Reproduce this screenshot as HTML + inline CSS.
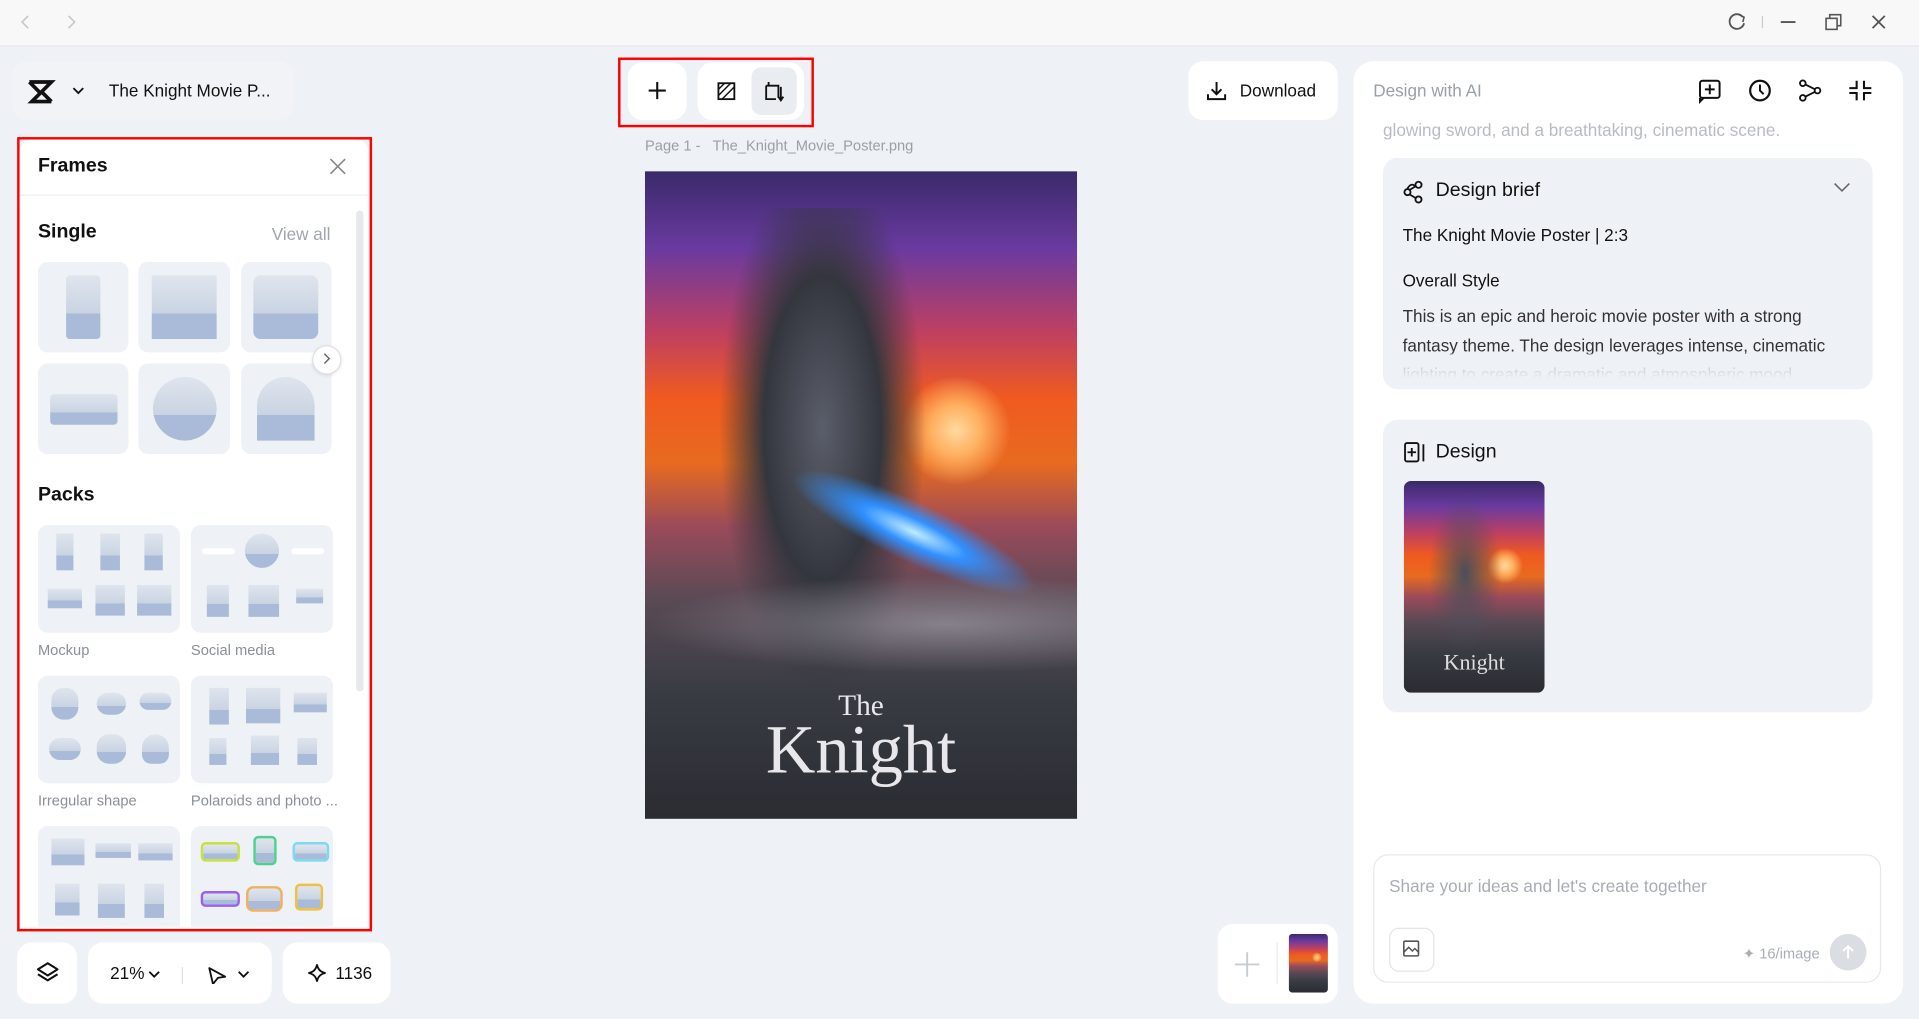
<!DOCTYPE html>
<html><head><meta charset="utf-8"><style>
html,body{margin:0;padding:0;width:1919px;height:1019px;overflow:hidden;background:#eef1f5;font-family:"Liberation Sans",sans-serif;}
#w{position:absolute;left:0;top:0;width:1568px;height:832px;transform:scale(1.2239);transform-origin:0 0;background:#eef1f5;}
.a{position:absolute;}
.card{position:absolute;background:#fff;border-radius:12px;}
.t{position:absolute;background:#eef1f5;border-radius:8px;}
.img{position:absolute;background:linear-gradient(#dfe5ee,#c9d3e2 60%,#a9bbd8 60%);}
.lbl{position:absolute;font-size:12px;color:#8a8f98;}
svg{position:absolute;}
.poster{background:
radial-gradient(circle at 72% 40%,#ffd9a0 0,#ffb060 5%,transparent 11%),
linear-gradient(180deg,#3a2a6a 0%,#6a3aa0 12%,#c04060 25%,#f05a20 35%,#e86a20 45%,#9a4a5a 55%,#5a4a55 66%,#3a3c44 80%,#2a2c32 100%);}
</style></head><body><div id="w">
<div class="a" style="left:0;top:0;width:1568px;height:37px;background:#f8f8f9;border-bottom:1px solid #e6e8eb"></div>
<svg style="left:14px;top:11px" width="60" height="14"><path d="M9 2L4 7l5 5M42 2l5 5-5 5" stroke="#c4c7cc" stroke-width="1.3" fill="none"/></svg>
<svg style="left:1410px;top:10px" width="140" height="16"><path d="M14 4a6 6 0 1 0 1 5" stroke="#555" stroke-width="1.5" fill="none"/><path d="M11 2l4 2-1 4" stroke="#555" stroke-width="1.3" fill="none"/><path d="M30 3v10" stroke="#ccc"/><path d="M45 8h12" stroke="#555" stroke-width="1.5"/><rect x="82" y="5" width="9" height="9" stroke="#555" stroke-width="1.3" fill="none"/><path d="M85 5V2h9v9h-3" stroke="#555" stroke-width="1.3" fill="none"/><path d="M120 3l10 10M130 3l-10 10" stroke="#555" stroke-width="1.5"/></svg>
<div class="a" style="left:10px;top:50px;width:230px;height:48px;background:#f1f3f6;border-radius:12px"></div>
<svg style="left:22px;top:65px" width="50" height="20"><path d="M2 2h18l-16 16h16M2 2l8 8M20 18l-8-8" stroke="#111" stroke-width="3" fill="none"/><path d="M38 7l4 4 4-4" stroke="#111" stroke-width="1.5" fill="none"/></svg>
<div class="a" style="left:89px;top:66px;font-size:14px;color:#111">The Knight Movie P...</div>
<div class="a" style="left:16px;top:114px;width:285px;height:644px;background:#fff;border-radius:10px 10px 0 0"></div>
<div class="a" style="left:14px;top:112px;width:286px;height:645px;border:2px solid #f00;"></div>
<div class="a" style="left:31px;top:127px;font-size:16px;font-weight:bold;color:#111">Frames</div>
<svg style="left:269px;top:129px" width="14" height="14"><path d="M1 1l12 12M13 1L1 13" stroke="#888" stroke-width="1.3"/></svg>
<div class="a" style="left:16px;top:159px;width:285px;height:1px;background:#eceef1"></div>
<div class="a" style="left:291px;top:172px;width:6px;height:393px;background:#e6e8ec;border-radius:3px"></div>
<div class="a" style="left:31px;top:181px;font-size:16px;font-weight:bold;color:#111">Single</div>
<div class="a" style="left:222px;top:183px;font-size:14px;color:#a0a4ab">View all</div>
<div class="t" style="left:31px;top:214px;width:74px;height:74px"></div><div class="img" style="left:54px;top:225px;width:28px;height:52px;border-radius:3px"></div>
<div class="t" style="left:113px;top:214px;width:75px;height:74px"></div><div class="img" style="left:124px;top:225px;width:53px;height:52px"></div>
<div class="t" style="left:197px;top:214px;width:74px;height:74px"></div><div class="img" style="left:207px;top:225px;width:53px;height:52px;border-radius:6px"></div>
<div class="t" style="left:31px;top:297px;width:74px;height:74px"></div><div class="img" style="left:41px;top:322px;width:55px;height:25px;border-radius:3px"></div>
<div class="t" style="left:113px;top:297px;width:75px;height:74px"></div><div class="img" style="left:125px;top:308px;width:52px;height:52px;border-radius:50%"></div>
<div class="t" style="left:197px;top:297px;width:74px;height:74px"></div><div class="img" style="left:210px;top:308px;width:47px;height:52px;border-radius:24px 24px 0 0"></div>
<div class="a" style="left:255px;top:282px;width:22px;height:22px;border-radius:50%;background:#fff;border:1px solid #dde0e5;box-shadow:0 1px 3px rgba(0,0,0,.1)"></div>
<svg style="left:262px;top:288px" width="10" height="10"><path d="M3 1l4 4-4 4" stroke="#666" stroke-width="1.2" fill="none"/></svg>
<div class="a" style="left:31px;top:396px;font-size:16px;font-weight:bold;color:#111">Packs</div>
<div class="t" style="left:31px;top:429px;width:116px;height:88px"></div>
<div class="t" style="left:156px;top:429px;width:116px;height:88px"></div>
<div class="lbl" style="left:31px;top:524px">Mockup</div><div class="lbl" style="left:156px;top:524px">Social media</div>
<div class="t" style="left:31px;top:552px;width:116px;height:88px"></div>
<div class="t" style="left:156px;top:552px;width:116px;height:88px"></div>
<div class="lbl" style="left:31px;top:647px">Irregular shape</div><div class="lbl" style="left:156px;top:647px">Polaroids and photo ...</div>
<div class="t" style="left:31px;top:675px;width:116px;height:82px;border-radius:8px 8px 0 0"></div>
<div class="t" style="left:156px;top:675px;width:116px;height:82px;border-radius:8px 8px 0 0"></div>
<div class="img" style="left:46px;top:436px;width:14px;height:30px"></div><div class="img" style="left:82px;top:436px;width:16px;height:30px"></div><div class="img" style="left:118px;top:436px;width:15px;height:30px"></div>
<div class="img" style="left:39px;top:481px;width:28px;height:16px"></div><div class="img" style="left:78px;top:478px;width:24px;height:25px"></div><div class="img" style="left:112px;top:478px;width:28px;height:25px"></div>
<div class="img" style="left:200px;top:436px;width:28px;height:28px;border-radius:50%"></div><div class="img" style="left:169px;top:478px;width:18px;height:26px"></div><div class="img" style="left:203px;top:478px;width:25px;height:26px"></div><div class="img" style="left:242px;top:481px;width:22px;height:12px"></div>
<div class="a" style="left:165px;top:448px;width:27px;height:5px;background:#fff;border-radius:3px"></div><div class="a" style="left:238px;top:448px;width:27px;height:5px;background:#fff;border-radius:3px"></div>
<div class="img" style="left:42px;top:562px;width:22px;height:26px;border-radius:10px"></div><div class="img" style="left:79px;top:566px;width:24px;height:18px;border-radius:10px"></div><div class="img" style="left:114px;top:566px;width:26px;height:14px;border-radius:10px"></div>
<div class="img" style="left:40px;top:603px;width:26px;height:18px;border-radius:10px"></div><div class="img" style="left:79px;top:600px;width:24px;height:24px;border-radius:10px"></div><div class="img" style="left:116px;top:600px;width:22px;height:24px;border-radius:12px 12px 8px 8px"></div>
<div class="img" style="left:171px;top:562px;width:16px;height:30px"></div><div class="img" style="left:201px;top:562px;width:28px;height:29px"></div><div class="img" style="left:240px;top:566px;width:27px;height:16px"></div>
<div class="img" style="left:171px;top:603px;width:14px;height:22px"></div><div class="img" style="left:205px;top:601px;width:23px;height:24px"></div><div class="img" style="left:243px;top:603px;width:16px;height:22px"></div>
<div class="img" style="left:42px;top:685px;width:27px;height:22px"></div><div class="img" style="left:78px;top:689px;width:29px;height:12px"></div><div class="img" style="left:113px;top:689px;width:28px;height:14px"></div>
<div class="img" style="left:45px;top:722px;width:20px;height:26px"></div><div class="img" style="left:80px;top:722px;width:22px;height:28px"></div><div class="img" style="left:118px;top:722px;width:16px;height:28px"></div>
<div class="img" style="left:164px;top:688px;width:28px;height:12px;border:2px solid #c8e040;border-radius:4px"></div><div class="img" style="left:207px;top:683px;width:15px;height:20px;border:2px solid #50d090;border-radius:4px"></div><div class="img" style="left:239px;top:688px;width:26px;height:12px;border:2px solid #80d8f0;border-radius:4px"></div>
<div class="img" style="left:164px;top:728px;width:28px;height:9px;border:2px solid #9a60f0;border-radius:4px"></div><div class="img" style="left:201px;top:724px;width:26px;height:17px;border:2px solid #f0b060;border-radius:6px"></div><div class="img" style="left:241px;top:722px;width:19px;height:18px;border:2px solid #f0c040;border-radius:4px"></div>
<div class="card" style="left:14px;top:770px;width:49px;height:50px"></div>
<svg style="left:29px;top:785px" width="20" height="20"><path d="M10 2l8 5-8 5-8-5z M2 11l8 5 8-5" stroke="#111" stroke-width="1.7" fill="none" stroke-linejoin="round"/></svg>
<div class="card" style="left:72px;top:770px;width:150px;height:50px"></div>
<div class="a" style="left:90px;top:787px;font-size:14px;color:#111">21%</div>
<svg style="left:120px;top:790px" width="100" height="14"><path d="M2 4l4 4 4-4M75 4l4 4 4-4" stroke="#111" stroke-width="1.5" fill="none"/><path d="M29 0v14" stroke="#e0e2e6"/><path d="M51 1l13 7-6 1-4 5z" stroke="#111" stroke-width="1.5" fill="none" stroke-linejoin="round"/></svg>
<div class="card" style="left:231px;top:770px;width:88px;height:50px"></div>
<svg style="left:251px;top:787px" width="16" height="16"><path d="M8 1Q9 7 15 8Q9 9 8 15Q7 9 1 8Q7 7 8 1z" stroke="#111" stroke-width="1.5" fill="none"/></svg>
<div class="a" style="left:274px;top:787px;font-size:14px;color:#111">1136</div>
<div class="a" style="left:505px;top:47px;width:156px;height:53px;border:2px solid #f00"></div>
<div class="card" style="left:513px;top:51px;width:48px;height:47px"></div>
<svg style="left:528px;top:65px" width="18" height="18"><path d="M9 2v14M2 9h14" stroke="#111" stroke-width="1.7"/></svg>
<div class="card" style="left:570px;top:51px;width:87px;height:47px"></div>
<div class="a" style="left:614px;top:55px;width:37px;height:39px;background:#e9ecf0;border-radius:8px"></div>
<svg style="left:585px;top:66px" width="18" height="18"><rect x="2" y="2" width="13" height="13" stroke="#111" stroke-width="1.5" fill="none"/><path d="M2 12L12 2M5 15L15 5M2 7l5-5" stroke="#111" stroke-width="1.2"/></svg>
<svg style="left:623px;top:65px" width="20" height="20"><path d="M5 2v3M3 5h10v10M3 5v11h8M15 6v10M13 14l2 3 2-3" stroke="#111" stroke-width="1.5" fill="none"/></svg>
<div class="a" style="left:527px;top:112px;font-size:12px;color:#9aa0a8">Page 1 -&nbsp;&nbsp; The_Knight_Movie_Poster.png</div>
<div class="a poster" style="left:527px;top:140px;width:353px;height:529px;overflow:hidden">
 <div class="a" style="left:60px;top:30px;width:170px;height:400px;background:radial-gradient(ellipse at 50% 45%,#5a5e6a 0,#34363e 40%,transparent 70%)"></div>
 <div class="a" style="left:110px;top:270px;width:220px;height:50px;transform:rotate(25deg);background:radial-gradient(ellipse,#c0ecff 0,#3090ff 30%,transparent 70%)"></div>
 <div class="a" style="left:0;top:330px;width:353px;height:80px;background:radial-gradient(ellipse at 70% 50%,rgba(200,200,210,.45),transparent 70%)"></div>
 <div class="a" style="left:0;top:425px;width:353px;text-align:center;font-family:'Liberation Serif',serif;color:#e8e8ec;font-size:24px;line-height:1">The</div>
 <div class="a" style="left:0;top:445px;width:353px;text-align:center;font-family:'Liberation Serif',serif;color:#e8e8ec;font-size:56px;line-height:1">Knight</div>
</div>
<div class="card" style="left:971px;top:50px;width:122px;height:48px"></div>
<svg style="left:985px;top:65px" width="18" height="18"><path d="M9 2v10M5 8l4 4 4-4M2 12v4h14v-4" stroke="#111" stroke-width="1.6" fill="none"/></svg>
<div class="a" style="left:1013px;top:66px;font-size:14px;color:#111">Download</div>
<div class="card" style="left:995px;top:755px;width:98px;height:65px"></div>
<svg style="left:1007px;top:776px" width="24" height="24"><path d="M12 2v20M2 12h20" stroke="#c8ccd2" stroke-width="1.6"/></svg>
<div class="a" style="left:1043px;top:770px;width:1px;height:34px;background:#e6e8ec"></div>
<div class="a poster" style="left:1053px;top:763px;width:32px;height:48px;border-radius:3px"></div>
<div class="a" style="left:1106px;top:50px;width:449px;height:770px;background:#fff;border-radius:16px"></div>
<div class="a" style="left:1122px;top:66px;font-size:14px;color:#9aa0a8">Design with AI</div>
<svg style="left:1386px;top:63px" width="148" height="22"><rect x="3" y="3" width="16" height="14" rx="2" stroke="#111" stroke-width="1.6" fill="none"/><path d="M6 17l-3 3v-3M11 6v8M7 10h8" stroke="#111" stroke-width="1.6" fill="none"/><circle cx="52" cy="11" r="8" stroke="#111" stroke-width="1.8" fill="none"/><path d="M52 6v5l3 3" stroke="#111" stroke-width="1.6" fill="none"/><circle cx="87" cy="5" r="2.3" stroke="#111" stroke-width="1.5" fill="none"/><circle cx="87" cy="17" r="2.3" stroke="#111" stroke-width="1.5" fill="none"/><circle cx="99" cy="11" r="2.3" stroke="#111" stroke-width="1.5" fill="none"/><path d="M89 6l8 4M89 16l8-4" stroke="#111" stroke-width="1.5"/><path d="M131 3v6h-6M137 3v6h6M131 19v-6h-6M137 19v-6h6" stroke="#111" stroke-width="1.7" fill="none"/></svg>
<div class="a" style="left:1130px;top:98px;font-size:14px;color:#b8bcc2">glowing sword, and a breathtaking, cinematic scene.</div>
<div class="a" style="left:1130px;top:129px;width:400px;height:189px;background:#eef1f5;border-radius:12px;overflow:hidden">
 <svg style="left:16px;top:18px" width="20" height="20"><circle cx="13" cy="4" r="2.5" stroke="#111" stroke-width="1.5" fill="none"/><circle cx="4" cy="10" r="2.5" stroke="#111" stroke-width="1.5" fill="none"/><circle cx="13" cy="16" r="2.5" stroke="#111" stroke-width="1.5" fill="none"/><path d="M6 8l5-3M6 12l5 3M10 5Q7 2 4 7" stroke="#111" stroke-width="1.4" fill="none"/></svg>
 <div class="a" style="left:43px;top:18px;font-size:16px;color:#111">Design brief</div>
 <svg style="left:367px;top:19px" width="16" height="10"><path d="M2 2l6 6 6-6" stroke="#666" stroke-width="1.3" fill="none"/></svg>
 <div class="a" style="left:16px;top:55px;font-size:14px;color:#111">The Knight Movie Poster | 2:3</div>
 <div class="a" style="left:16px;top:92px;font-size:14px;color:#111">Overall Style</div>
 <div class="a" style="left:16px;top:117px;width:368px;font-size:14px;line-height:24px;color:#333">This is an epic and heroic movie poster with a strong fantasy theme. The design leverages intense, cinematic lighting to create a dramatic and atmospheric mood</div>
 <div class="a" style="left:0;top:160px;width:400px;height:29px;background:linear-gradient(rgba(238,241,245,.6),#eef1f5 70%)"></div>
</div>
<div class="a" style="left:1130px;top:343px;width:400px;height:239px;background:#eef1f5;border-radius:12px">
 <svg style="left:16px;top:17px" width="20" height="20"><rect x="2" y="2" width="11" height="15" rx="1.5" stroke="#111" stroke-width="1.5" fill="none"/><path d="M7.5 6v7M4 9.5h7M17 3v14" stroke="#111" stroke-width="1.5"/></svg>
 <div class="a" style="left:43px;top:18px;font-size:16px;color:#111">Design</div>
 <div class="a poster" style="left:17px;top:50px;width:115px;height:173px;border-radius:6px;overflow:hidden"><div class="a" style="left:20px;top:10px;width:60px;height:130px;background:radial-gradient(ellipse,#4a4e5a 0,transparent 70%)"></div><div class="a" style="left:0;top:138px;width:115px;text-align:center;font-family:'Liberation Serif',serif;color:#ddd;font-size:18px">Knight</div></div>
</div>
<div class="a" style="left:1122px;top:698px;width:413px;height:103px;border:1px solid #e6e8ec;border-radius:12px;background:#fff"></div>
<div class="a" style="left:1135px;top:716px;font-size:14px;color:#a8adb4">Share your ideas and let's create together</div>
<div class="a" style="left:1135px;top:758px;width:35px;height:34px;border:1px solid #e2e5e9;border-radius:8px"></div>
<svg style="left:1145px;top:767px" width="16" height="16"><rect x="2" y="2" width="12" height="12" rx="1" stroke="#555" stroke-width="1.3" fill="none"/><path d="M2 11l4-4 3 3 2-2 3 3" stroke="#555" stroke-width="1.2" fill="none"/></svg>
<div class="a" style="left:1424px;top:772px;font-size:12px;color:#a8adb4">✦ 16/image</div>
<div class="a" style="left:1495px;top:763px;width:30px;height:30px;border-radius:50%;background:#dadde2"></div>
<svg style="left:1503px;top:771px" width="14" height="14"><path d="M7 12V2M3 6l4-4 4 4" stroke="#fff" stroke-width="1.6" fill="none"/></svg>
</div></body></html>
